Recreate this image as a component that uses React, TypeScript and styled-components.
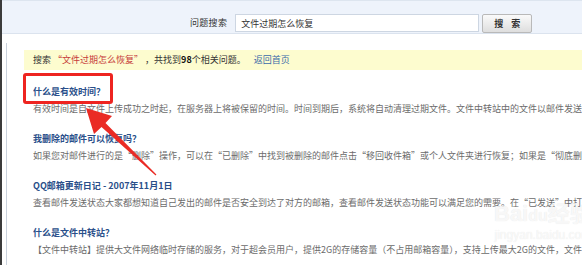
import styled, { createGlobalStyle } from 'styled-components';

const GlobalStyle = createGlobalStyle`
  html, body {
    margin: 0;
    padding: 0;
    height: 100%;
    overflow: hidden;
    background: #fff;
  }
  body {
    font-family: "Noto Sans CJK SC", "Liberation Sans", sans-serif;
    font-size: 9px;
    color: #333;
  }
`;

type Item = { title: string; desc: string };

const items: Item[] = [
  {
    title: '什么是有效时间？',
    desc: '有效时间是自文件上传成功之时起，在服务器上将被保留的时间。时间到期后，系统将自动清理过期文件。文件中转站中的文件以邮件发送出去后，收件人也只能在有效时间内下载。',
  },
  {
    title: '我删除的邮件可以恢复吗？',
    desc: '如果您对邮件进行的是“删除”操作，可以在“已删除”中找到被删除的邮件点击“移回收件箱”或个人文件夹进行恢复；如果是“彻底删除”，则无法恢复。',
  },
  {
    title: 'QQ邮箱更新日记 - 2007年11月1日',
    desc: '查看邮件发送状态大家都想知道自己发出的邮件是否安全到达了对方的邮箱，查看邮件发送状态功能可以满足您的需要。在“已发送”中打开邮件即可查看。',
  },
  {
    title: '什么是文件中转站？',
    desc: '【文件中转站】提供大文件网络临时存储的服务，对于超会员用户，提供2G的存储容量（不占用邮箱容量），支持上传最大2G的文件，文件上传后可保存一段时间。',
  },
];

const App = () => {
  return (
    <>
      <GlobalStyle />
      <Page>
        <DarkEdge />
        <Main>
          <TopStrip />
          <SearchBand>
            <SearchLabel>问题搜索</SearchLabel>
            <SearchInput readOnly value="文件过期怎么恢复" />
            <SearchButton>搜 索</SearchButton>
          </SearchBand>
          <Content>
            <ResultBar>
              搜索 <Keyword>“文件过期怎么恢复”</Keyword> ，共找到<Count>98</Count>个相关问题。
              <BackLink>返回首页</BackLink>
            </ResultBar>
            <List>
              {items.map((item) => (
                <ListItem key={item.title}>
                  <Title>{item.title}</Title>
                  <Desc>{item.desc}</Desc>
                </ListItem>
              ))}
            </List>
            <Highlight />
            <Arrow viewBox="0 0 582 265">
              <polygon points="86,123 112,131 105.5,138 156.4,189.5 155.6,190.5 101.5,142 94,149" fill="#ea2b25" />
            </Arrow>
            <Watermark>
              <WmLogo>Bai<WmPaw>du</WmPaw>经验</WmLogo>
              <WmUrl>jingyan.baidu.com</WmUrl>
            </Watermark>
          </Content>
        </Main>
      </Page>
    </>
  );
};

export default App;

const Page = styled.div`
  display: flex;
  width: 582px;
  height: 265px;
  overflow: hidden;
`;

const DarkEdge = styled.div`
  width: 2px;
  flex-shrink: 0;
  background: #3b3b3b;
`;

const Main = styled.div`
  flex: 1;
  display: flex;
  flex-direction: column;
  min-width: 0;
`;

const TopStrip = styled.div`
  height: 3px;
  background: #f6f8fb;
  border-bottom: 1px solid #dde5ef;
`;

const SearchBand = styled.div`
  height: 43px;
  background: #eef3fb;
  border-bottom: 1px solid #dbe3ee;
  display: flex;
  align-items: flex-start;
  padding: 13px 0 0 188px;
  box-sizing: border-box;
`;

const SearchLabel = styled.span`
  line-height: 18px;
  color: #333;
  margin-right: 8px;
  letter-spacing: 0.3px;
`;

const SearchInput = styled.input`
  width: 244px;
  height: 18px;
  box-sizing: border-box;
  border: 1px solid #cdd6e2;
  background: #fff;
  padding: 0 5px;
  font-family: inherit;
  font-size: 9px;
  color: #333;
  outline: none;
`;

const SearchButton = styled.button`
  margin-left: 3px;
  width: 50px;
  height: 19px;
  box-sizing: border-box;
  border: 1px solid #b9b9b9;
  border-radius: 2px;
  background: linear-gradient(#fafafa, #dedede);
  font-family: inherit;
  font-size: 9px;
  font-weight: bold;
  letter-spacing: 3px;
  text-indent: 3px;
  color: #333;
  padding: 0;
`;

const Content = styled.div`
  position: relative;
  margin: 9px 0 0 4px;
  border-left: 1px solid #c9d1dc;
  padding: 7px 0 0 17px;
  flex: 1;
`;

const ResultBar = styled.div`
  height: 20px;
  line-height: 20px;
  background: #fdfccf;
  padding-left: 9px;
  white-space: nowrap;
  color: #333;
`;

const Keyword = styled.span`
  color: #c63a3a;
`;

const Count = styled.b`
  color: #111;
`;

const BackLink = styled.span`
  color: #3b6aa9;
  margin-left: 8px;
`;

const List = styled.div`
  margin-top: 13px;
  padding-left: 9px;
`;

const ListItem = styled.div`
  margin-bottom: 12px;
  white-space: nowrap;
  overflow: hidden;
`;

const Title = styled.div`
  line-height: 17px;
  font-weight: bold;
  color: #2a4f8a;
`;

const Desc = styled.div`
  line-height: 18px;
  color: #6b6b6b;
`;

const Highlight = styled.div`
  position: absolute;
  left: 16px;
  top: 30px;
  width: 90px;
  height: 31px;
  box-sizing: border-box;
  border: 3px solid #ee2420;
  border-radius: 3px;
`;

const Arrow = styled.svg`
  position: absolute;
  left: -7px;
  top: -58px;
  width: 582px;
  height: 265px;
  pointer-events: none;
`;

const Watermark = styled.div`
  position: absolute;
  left: 487px;
  top: 158px;
  display: flex;
  flex-direction: column;
  align-items: center;
  color: rgba(255, 255, 255, 0.75);
  text-shadow: 0 0 1px rgba(0, 0, 0, 0.12);
  pointer-events: none;
`;

const WmLogo = styled.div`
  font-family: "Liberation Sans", "Noto Sans CJK SC", sans-serif;
  font-size: 22px;
  font-weight: bold;
  line-height: 25px;
  white-space: nowrap;
`;

const WmPaw = styled.span`
  font-size: 16px;
`;

const WmUrl = styled.div`
  font-family: "Liberation Sans", sans-serif;
  font-size: 12px;
  line-height: 15px;
  white-space: nowrap;
`;
